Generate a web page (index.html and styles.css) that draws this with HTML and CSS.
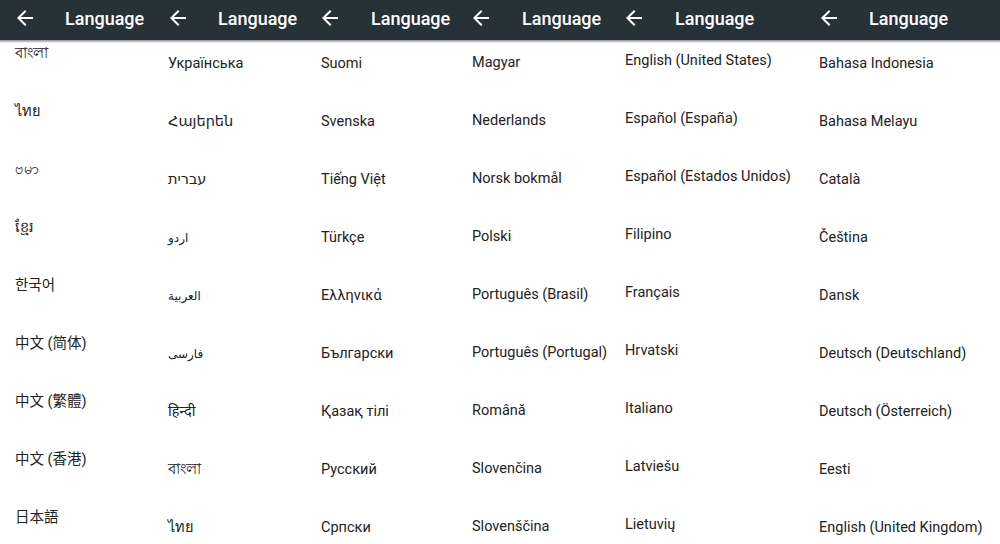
FILE: index.html
```html
<!DOCTYPE html>
<html lang="en">
<head>
  <meta charset="UTF-8" />
  <meta name="viewport" content="width=device-width, initial-scale=1.0" />
  <title>Language</title>
  <link rel="stylesheet" href="styles.css">
</head>
<body>
  <div class="screens">

    <!-- 1 -->
    <section class="screen w153">
      <header class="app-bar">
        <svg class="back" viewBox="0 0 24 24"><path d="M20 11H7.83l5.59-5.59L12 4l-8 8 8 8 1.41-1.41L7.83 13H20v-2z"/></svg>
        <span class="title">Language</span>
      </header>
      <div class="list-wrap">
        <ul class="lang-list up10">
          <li>বাংলা</li>
          <li>ไทย</li>
          <li>ဗမာ</li>
          <li>ខ្មែរ</li>
          <li>한국어</li>
          <li>中文 (简体)</li>
          <li>中文 (繁體)</li>
          <li>中文 (香港)</li>
          <li>日本語</li>
        </ul>
      </div>
    </section>

    <!-- 2 -->
    <section class="screen w152">
      <header class="app-bar">
        <svg class="back" viewBox="0 0 24 24"><path d="M20 11H7.83l5.59-5.59L12 4l-8 8 8 8 1.41-1.41L7.83 13H20v-2z"/></svg>
        <span class="title">Language</span>
      </header>
      <div class="list-wrap">
        <ul class="lang-list">
          <li>Українська</li>
          <li>Հայերեն</li>
          <li>עברית</li>
          <li class="small">اردو</li>
          <li class="small">العربية</li>
          <li class="small">فارسی</li>
          <li>हिन्दी</li>
          <li>বাংলা</li>
          <li>ไทย</li>
        </ul>
      </div>
    </section>

    <!-- 3 -->
    <section class="screen w151 pad16">
      <header class="app-bar">
        <svg class="back" viewBox="0 0 24 24"><path d="M20 11H7.83l5.59-5.59L12 4l-8 8 8 8 1.41-1.41L7.83 13H20v-2z"/></svg>
        <span class="title">Language</span>
      </header>
      <div class="list-wrap">
        <ul class="lang-list">
          <li>Suomi</li>
          <li>Svenska</li>
          <li>Tiếng Việt</li>
          <li>Türkçe</li>
          <li>Ελληνικά</li>
          <li>Български</li>
          <li>Қазақ тілі</li>
          <li>Русский</li>
          <li>Српски</li>
        </ul>
      </div>
    </section>

    <!-- 4 -->
    <section class="screen w153 pad16">
      <header class="app-bar">
        <svg class="back" viewBox="0 0 24 24"><path d="M20 11H7.83l5.59-5.59L12 4l-8 8 8 8 1.41-1.41L7.83 13H20v-2z"/></svg>
        <span class="title">Language</span>
      </header>
      <div class="list-wrap">
        <ul class="lang-list up1">
          <li>Magyar</li>
          <li>Nederlands</li>
          <li>Norsk bokmål</li>
          <li>Polski</li>
          <li>Português (Brasil)</li>
          <li>Português (Portugal)</li>
          <li>Română</li>
          <li>Slovenčina</li>
          <li>Slovenščina</li>
        </ul>
      </div>
    </section>

    <!-- 5 -->
    <section class="screen w195 pad16">
      <header class="app-bar">
        <svg class="back" viewBox="0 0 24 24"><path d="M20 11H7.83l5.59-5.59L12 4l-8 8 8 8 1.41-1.41L7.83 13H20v-2z"/></svg>
        <span class="title">Language</span>
      </header>
      <div class="list-wrap">
        <ul class="lang-list up3">
          <li>English (United States)</li>
          <li>Español (España)</li>
          <li>Español (Estados Unidos)</li>
          <li>Filipino</li>
          <li>Français</li>
          <li>Hrvatski</li>
          <li>Italiano</li>
          <li>Latviešu</li>
          <li>Lietuvių</li>
        </ul>
      </div>
    </section>

    <!-- 6 -->
    <section class="screen w196">
      <header class="app-bar">
        <svg class="back" viewBox="0 0 24 24"><path d="M20 11H7.83l5.59-5.59L12 4l-8 8 8 8 1.41-1.41L7.83 13H20v-2z"/></svg>
        <span class="title">Language</span>
      </header>
      <div class="list-wrap">
        <ul class="lang-list">
          <li>Bahasa Indonesia</li>
          <li>Bahasa Melayu</li>
          <li>Català</li>
          <li>Čeština</li>
          <li>Dansk</li>
          <li>Deutsch (Deutschland)</li>
          <li>Deutsch (Österreich)</li>
          <li>Eesti</li>
          <li>English (United Kingdom)</li>
        </ul>
      </div>
    </section>

  </div>
</body>
</html>
```

FILE: styles.css
```css
html,
body {
  margin: 0;
  height: 100%;
  overflow: hidden;
}

body {
  font-family: "Roboto", "Noto Sans", "DejaVu Sans", "Noto Sans CJK SC", sans-serif;
  background-color: #fff;
  color: #222;
}

.screens {
  display: flex;
  height: 544px;
}

.screen {
  display: flex;
  flex-direction: column;
  flex: none;
  --inset: 15px;
}

.screen.pad16 {
  --inset: 16px;
}

.w151 { width: 151px; }
.w152 { width: 152px; }
.w153 { width: 153px; }
.w195 { width: 195px; }
.w196 { width: 196px; }

.app-bar {
  flex: none;
  position: relative;
  height: 40px;
  background-color: #263238;
  display: flex;
  align-items: center;
  padding-left: 13px;
  z-index: 2;
}

/* shadow under the bar, no side blur so the bars join */
.app-bar::after {
  content: "";
  position: absolute;
  left: 0;
  right: 0;
  top: 100%;
  height: 3px;
  background: linear-gradient(rgba(0, 0, 0, 0.45), rgba(0, 0, 0, 0));
}

.app-bar .back {
  width: 24px;
  height: 24px;
  fill: #fff;
  margin-top: -4px;
}

.app-bar .title {
  margin-left: 28px;
  margin-top: -4px;
  color: #fff;
  font-size: 18px;
  font-weight: 500;
  white-space: nowrap;
}

.screen.pad16 .app-bar .title {
  margin-left: 29px;
}

.list-wrap {
  flex: 1;
  overflow: hidden;
}

.lang-list {
  list-style: none;
  margin: 0;
  padding: 0 0 0 var(--inset);
}

.lang-list.up10 { margin-top: -10px; }
.lang-list.up3 { margin-top: -3px; }
.lang-list.up1 { margin-top: -1px; }

.lang-list li {
  height: 58px;
  box-sizing: border-box;
  padding-top: 14px;
  line-height: 20px;
  font-size: 14.5px;
  white-space: nowrap;
}

.lang-list li.small {
  font-size: 12px;
}
```
